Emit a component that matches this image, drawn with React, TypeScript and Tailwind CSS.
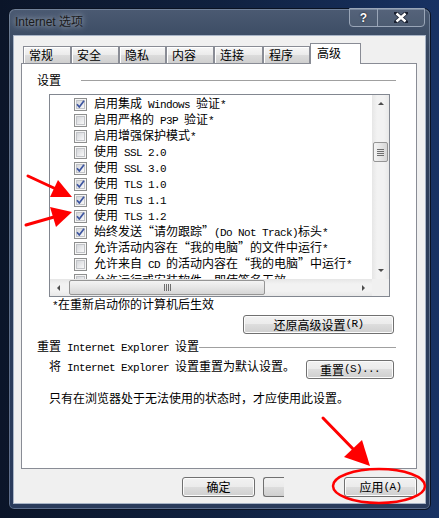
import React from "react";

type Item = { label: string; checked: boolean };

const items: Item[] = [
  { label: "启用集成 Windows 验证*", checked: true },
  { label: "启用严格的 P3P 验证*", checked: false },
  { label: "启用增强保护模式*", checked: false },
  { label: "使用 SSL 2.0", checked: false },
  { label: "使用 SSL 3.0", checked: true },
  { label: "使用 TLS 1.0", checked: true },
  { label: "使用 TLS 1.1", checked: true },
  { label: "使用 TLS 1.2", checked: true },
  { label: "始终发送“请勿跟踪”(Do Not Track)标头*", checked: true },
  { label: "允许活动内容在“我的电脑”的文件中运行*", checked: false },
  { label: "允许来自 CD 的活动内容在“我的电脑”中运行*", checked: false },
  { label: "允许运行或安装软件，即使签名无效", checked: false },
];

const tabs = [
  { name: "常规", w: "w-[48px]" },
  { name: "安全", w: "w-[48px]" },
  { name: "隐私", w: "w-[47px]" },
  { name: "内容", w: "w-[48px]" },
  { name: "连接", w: "w-[49px]" },
  { name: "程序", w: "w-[47px]" },
];

// latin runs get the narrow mono face, like the half-width glyphs of the system font
function Mixed({ text }: { text: string }) {
  const parts = text.match(/[\x20-\x7e]+|[^\x20-\x7e]+/g) ?? [];
  return (
    <>
      {parts.map((p, i) =>
        /[\x20-\x7e]/.test(p[0]) ? (
          <span key={i} className="font-['Liberation_Mono',monospace] text-[11px] tracking-[-0.6px] whitespace-pre">
            {p}
          </span>
        ) : (
          <span key={i}>{p}</span>
        )
      )}
    </>
  );
}

function CheckBox({ checked }: { checked: boolean }) {
  return (
    <svg width="13" height="13" viewBox="0 0 13 13" className="shrink-0">
      <defs>
        <linearGradient id="cbfill" x1="0" y1="0" x2="1" y2="1">
          <stop offset="0" stopColor="#d2d4d8" />
          <stop offset="1" stopColor="#fbfbfb" />
        </linearGradient>
      </defs>
      <rect x="0.5" y="0.5" width="12" height="12" fill="#f6f6f6" stroke="#8e8f8f" />
      <rect x="2.5" y="2.5" width="8" height="8" fill="url(#cbfill)" stroke="#c2c4c8" />
      {checked && (
        <path d="M3 6.2 L5.3 9 L10 2.8" fill="none" stroke="#3d55a0" strokeWidth="1.7" strokeLinejoin="round" />
      )}
    </svg>
  );
}

function Arrow({ dir }: { dir: "up" | "down" | "left" | "right" }) {
  const d = {
    up: "M1 4 L4 1 L7 4 Z",
    down: "M1 1 L4 4 L7 1 Z",
    left: "M4 1 L1 4 L4 7 Z",
    right: "M1 1 L4 4 L1 7 Z",
  }[dir];
  const vertical = dir === "up" || dir === "down";
  return (
    <svg width={vertical ? 8 : 5} height={vertical ? 5 : 8} viewBox={vertical ? "0 0 8 5" : "0 0 5 8"}>
      <path d={d} fill="#4d4d4d" />
    </svg>
  );
}

const btn =
  "rounded-[3px] border border-[#707070] bg-[linear-gradient(to_bottom,#f2f2f2_0%,#ebebeb_50%,#dddddd_50%,#cfcfcf_100%)] shadow-[inset_0_0_0_1px_#fcfcfc] flex items-center justify-center text-[12px] leading-none";

export default function App() {
  return (
    <div className="relative w-[439px] h-[518px] overflow-hidden bg-[linear-gradient(to_right,#0b1529,#10213f_50%,#183263)] pt-[8px] pl-[8px] font-['Noto_Sans_CJK_SC',sans-serif] text-black">
      <div className="w-[423px] h-[502px] rounded-t-[7px] rounded-b-[6px] border border-[#0a1222] bg-[linear-gradient(to_bottom,#4b5a72,#36465f_8%,#2c3c58_40%,#2a3b5c)] shadow-[inset_0_0_0_1px_rgba(190,205,230,0.35)] flex flex-col">
        {/* title bar */}
        <div className="h-[26px] flex items-center justify-between pl-[6px] pr-[5px]">
          <span className="text-[12px] font-['Liberation_Sans','Noto_Sans_CJK_SC',sans-serif] text-[#1a1a1a] [text-shadow:0_0_6px_rgba(230,235,245,0.9)]">
            Internet 选项
          </span>
          <div className="self-start mt-[-1px] h-[19px] flex rounded-b-[4px] border border-[#9aa6b8] overflow-hidden bg-[rgba(255,255,255,0.06)]">
            <div className="w-[28px] flex items-center justify-center border-r border-[#9aa6b8] text-white font-bold text-[12px] font-['Liberation_Sans',sans-serif] [text-shadow:0_0_2px_#000]">
              ?
            </div>
            <div className="w-[46px] flex items-center justify-center">
              <svg width="14" height="11" viewBox="0 0 14 11">
                <path d="M2 1 L12 10 M12 1 L2 10" stroke="#1a2030" strokeWidth="4" strokeLinecap="square" />
                <path d="M2.5 1.5 L11.5 9.5 M11.5 1.5 L2.5 9.5" stroke="#ffffff" strokeWidth="2.4" />
              </svg>
            </div>
          </div>
        </div>

        {/* client */}
        <div className="mx-[4px] h-[469px] border border-[#a8b4c6] bg-[#f0f0f0] flex flex-col pt-[7px]">
          {/* tabs */}
          <div className="relative z-10 h-[21px] mb-[-1px] ml-[9px] flex items-end">
            {tabs.map((t) => (
              <div
                key={t.name}
                className={`${t.w} h-[17px] mb-[1px] border border-b-0 border-[#898c95] bg-[linear-gradient(to_bottom,#f6f6f6,#ebebeb_50%,#dcdcdc_51%,#cfcfcf)] shadow-[inset_1px_1px_0_#ffffff] pl-[5px] text-[12px] leading-[16px]`}
              >
                {t.name}
              </div>
            ))}
            <div className="w-[51px] h-[21px] border border-b-0 border-[#898c95] bg-white pl-[6px] pt-[1px] text-[12px] leading-[16px]">
              高级
            </div>
          </div>

          {/* panel */}
          <div className="ml-[7px] w-[396px] h-[406px] border border-[#898c95] bg-white flex flex-col">
            <div className="mt-[8px] h-[16px] pl-[15px] pr-[20px] flex items-center">
              <span className="text-[12px] leading-[16px]">设置</span>
              <div className="ml-[20px] flex-1 h-px bg-[#a0a0a0]" />
            </div>

            {/* list */}
            <div className="mt-[6px] ml-[27px] w-[341px] h-[203px] border border-[#828790] flex flex-col">
              <div className="flex flex-1 min-h-0">
                <div className="flex-1 overflow-hidden pt-[1px]">
                  {items.map((it) => (
                    <div key={it.label} className="h-[16px] pl-[24px] flex items-center gap-[7px] whitespace-nowrap text-[12px] leading-[16px]">
                      <CheckBox checked={it.checked} />
                      <span>
                        <Mixed text={it.label} />
                      </span>
                    </div>
                  ))}
                </div>
                <div className="w-[17px] bg-[linear-gradient(to_right,#e6e6e6,#f2f2f2_30%,#f2f2f2_70%,#e8e8e8)] flex flex-col items-center">
                  <div className="h-[17px] w-full flex items-center justify-center">
                    <Arrow dir="up" />
                  </div>
                  <div className="mt-[30px] w-[15px] h-[20px] rounded-[2px] border border-[#959595] bg-[linear-gradient(to_right,#f4f4f4,#e6e6e6_50%,#d6d6d6)] flex flex-col items-center justify-center gap-[1px]">
                    <div className="w-[7px] h-px bg-[#6e6e6e]" />
                    <div className="w-[7px] h-px bg-[#6e6e6e]" />
                    <div className="w-[7px] h-px bg-[#6e6e6e]" />
                    <div className="w-[7px] h-px bg-[#6e6e6e]" />
                  </div>
                  <div className="flex-1" />
                  <div className="h-[17px] w-full flex items-center justify-center">
                    <Arrow dir="down" />
                  </div>
                </div>
              </div>
              <div className="h-[17px] flex">
                <div className="flex-1 flex items-center bg-[linear-gradient(to_bottom,#e6e6e6,#f2f2f2_30%,#f2f2f2_70%,#e8e8e8)]">
                  <div className="w-[17px] h-full flex items-center justify-center">
                    <Arrow dir="left" />
                  </div>
                  <div className="ml-[2px] w-[196px] h-[15px] rounded-[2px] border border-[#959595] bg-[linear-gradient(to_bottom,#f4f4f4,#e6e6e6_50%,#d6d6d6)] flex items-center justify-center gap-[1px]">
                    <div className="w-px h-[7px] bg-[#6e6e6e]" />
                    <div className="w-px h-[7px] bg-[#6e6e6e]" />
                    <div className="w-px h-[7px] bg-[#6e6e6e]" />
                    <div className="w-px h-[7px] bg-[#6e6e6e]" />
                  </div>
                  <div className="flex-1" />
                  <div className="w-[17px] h-full flex items-center justify-center">
                    <Arrow dir="right" />
                  </div>
                </div>
                <div className="w-[17px] bg-[#f0f0f0]" />
              </div>
            </div>

            <div className="ml-[30px] h-[14px] text-[12px] leading-[14px]">
              <Mixed text="*在重新启动你的计算机后生效" />
            </div>

            <div className={`${btn} self-end mr-[22px] mt-[4px] w-[151px] h-[19px]`}>
              <Mixed text="还原高级设置(R)" />
            </div>

            <div className="mt-[5px] h-[16px] pl-[15px] pr-[20px] flex items-center">
              <span className="text-[12px] leading-[16px] whitespace-nowrap">
                <Mixed text="重置 Internet Explorer 设置" />
              </span>
              <div className="flex-1 h-px bg-[#a0a0a0]" />
            </div>

            <div className="mt-[5px] pl-[27px] pr-[22px] flex items-start justify-between">
              <span className="text-[12px] leading-[12px] whitespace-nowrap">
                <Mixed text="将 Internet Explorer 设置重置为默认设置。" />
              </span>
              <div className={`${btn} w-[88px] h-[19px]`}>
                <Mixed text="重置(S)..." />
              </div>
            </div>

            <div className="mt-[12px] pl-[27px] text-[12px] leading-[14px]">
              只有在浏览器处于无法使用的状态时，才应使用此设置。
            </div>
          </div>

          {/* dialog buttons */}
          <div className="mt-[8px] ml-[168px] flex">
            <div className={`${btn} w-[73px] h-[20px]`}>确定</div>
            <div className="ml-[8px] w-[21px] h-[20px] rounded-l-[3px] border border-r-0 border-[#707070] bg-[linear-gradient(to_bottom,#f2f2f2_0%,#ebebeb_50%,#dddddd_50%,#cfcfcf_100%)]" />
            <div className={`${btn} ml-[60px] w-[73px] h-[20px]`}>
              <Mixed text="应用(A)" />
            </div>
          </div>
        </div>
      </div>

      {/* red annotations drawn over the screenshot */}
      <svg className="absolute inset-0 pointer-events-none" width="439" height="518" viewBox="0 0 439 518">
        <g stroke="#ff0000" strokeWidth="3" strokeLinecap="round" fill="none">
          <path d="M28 176 L56 189" />
          <path d="M26 225 L54 217" />
          <path d="M323 418 L356 452" />
          <ellipse cx="379" cy="486" rx="46" ry="17" strokeWidth="2.5" />
        </g>
        <g fill="#ff0000">
          <path d="M72 197 L58 180 L50 197 Z" />
          <path d="M72 212 L50 207 L56 227 Z" />
          <path d="M370 466 L344 457 L362 440 Z" />
        </g>
      </svg>
    </div>
  );
}
